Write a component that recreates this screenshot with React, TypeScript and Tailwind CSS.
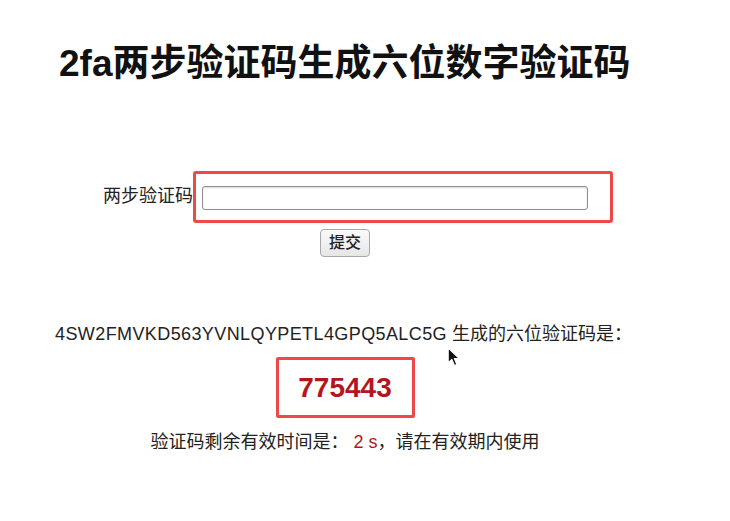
import { useState } from 'react'

const SECRET = '4SW2FMVKD563YVNLQYPETL4GPQ5ALC5G'

function Pointer() {
  return (
    <svg width="14" height="21" viewBox="0 0 13 20" className="absolute left-[447px] top-[347px]">
      <path d="M1 1 L1 15 L4.5 11.8 L7 17.5 L9.2 16.6 L6.8 11 L11.5 11 Z" fill="#111" stroke="#fff" strokeWidth="1" strokeLinejoin="round" />
    </svg>
  )
}

export default function App() {
  const [code, setCode] = useState('')

  return (
    <div className="relative h-[521px] w-[730px] overflow-hidden bg-white text-[#222] [font-family:'Liberation_Sans','Noto_Sans_CJK_SC',sans-serif]">
      <h1 className="mt-[44px] whitespace-nowrap pl-[59px] text-[37px] font-bold leading-[40px] text-[#111]">
        2fa两步验证码生成六位数字验证码
      </h1>

      <div className="flex w-[690px] flex-col items-center">
        {/* form */}
        <div className="ml-[26px] mt-[87px] flex items-center">
          <label className="mb-[3px] w-[90px] text-[18px] leading-[24px]">两步验证码</label>
          <div className="rounded-[3px] border-[3px] border-[#f04848] pb-[10px] pl-[6px] pr-[22px] pt-[12px]">
            <input
              value={code}
              onChange={e => setCode(e.target.value)}
              className="block h-[24px] w-[386px] rounded-[3px] border border-[#8f8f8f] bg-white px-1 text-[16px] shadow-[inset_0_1px_2px_rgba(0,0,0,0.15)] outline-none"
            />
          </div>
        </div>
        <button type="button"
          className="mt-[6px] h-[28px] w-[50px] rounded-[4px] border border-[#a8a8a8] bg-gradient-to-b from-[#fafafa] to-[#e6e6e6] text-[16px] font-medium leading-none text-[#222]">
          提交
        </button>

        {/* result */}
        <p className="mr-[3px] mt-[65px] whitespace-nowrap text-[18px] leading-[24px]">
          <span className="tracking-[0.4px]">{SECRET}</span> 生成的六位验证码是：
        </p>
        <div className="mt-[11px] flex h-[61px] w-[139px] items-center justify-center rounded-[2px] border-[3px] border-[#f04848]">
          <span className="text-[28px] font-bold leading-none text-[#b3161c]">775443</span>
        </div>
        <p className="mt-[12px] whitespace-nowrap text-[18px] leading-[24px]">
          验证码剩余有效时间是：<span className="text-[#b3161c]"> 2 s</span>，请在有效期内使用
        </p>
      </div>

      <Pointer />
    </div>
  )
}
